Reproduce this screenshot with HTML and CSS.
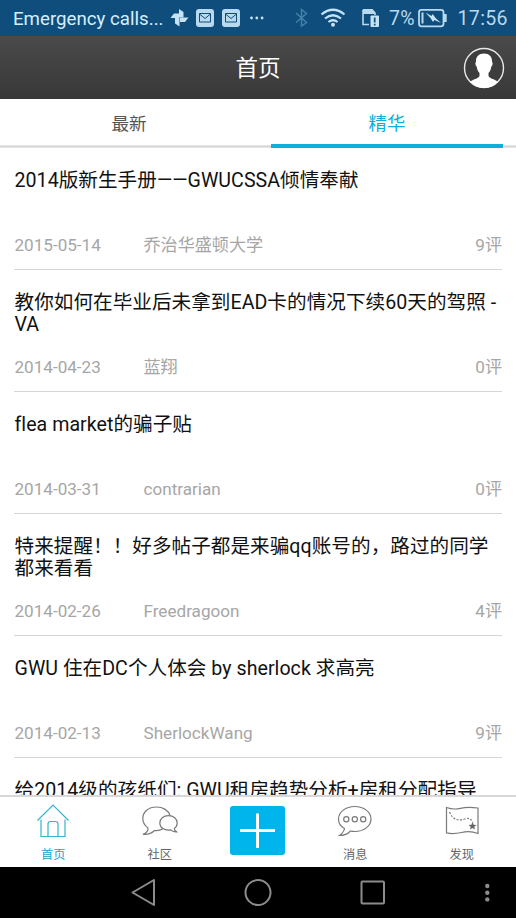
FILE: index.html
```html
<!DOCTYPE html>
<html lang="zh-CN">
<head>
    <meta charset="UTF-8">
    <meta name="viewport" content="width=device-width, initial-scale=1.0">
    <title>首页</title>
    <link rel="stylesheet" href="styles.css">
</head>
<body>
<div class="phone">
    <div class="status">
        <span class="carrier">Emergency calls...</span>
        <svg class="status-icons" width="354" height="36" viewBox="162 0 354 36">
            <!-- pinwheel -->
            <g fill="#c6e2f5">
                <path d="M179 17.500V9l4.500 3v5.500z"/>
                <path d="M180 17.500h8.500l-3.500 4.500h-5z"/>
                <path d="M179.500 18v8.500l-4.500-3V18z"/>
                <path d="M179 18h-8.500l3.500-4.500h5z"/>
            </g>
            <!-- mail -->
            <g fill="#b9d9ee">
                <rect x="196" y="9" width="18" height="18" rx="3"/>
                <rect x="222" y="9" width="18" height="18" rx="3"/>
            </g>
            <g fill="none" stroke="#0e4d7c" stroke-width="1">
                <path d="M199.500 13.500h11v8.500h-11zM199.500 14l5.500 4.500 5.500-4.500"/>
                <path d="M225.500 13.500h11v8.500h-11zM225.500 14l5.500 4.500 5.500-4.500"/>
            </g>
            <g fill="#c6e2f5">
                <circle cx="251.500" cy="18" r="1.400"/>
                <circle cx="256.800" cy="18" r="1.400"/>
                <circle cx="262.100" cy="18" r="1.400"/>
            </g>
            <!-- bluetooth -->
            <path d="M296 13l10.500 9.500-5 3.500V9.500l5 4L296 22.500" fill="none" stroke="#4480a8" stroke-width="1.500"/>
            <!-- wifi -->
            <g fill="none" stroke="#c6e2f5" stroke-width="2.200">
                <path d="M321.500 14.500q11.500-9.500 23 0"/>
                <path d="M325 18.500q8-6.500 16 0"/>
                <path d="M328.500 22q4.500-3.500 9 0"/>
            </g>
            <circle cx="333" cy="24.700" r="2" fill="#c6e2f5"/>
            <!-- sim -->
            <path d="M363 9.800h9l3 3.200v2M363 9.800V24.500h6" fill="none" stroke="#b9d9ee" stroke-width="1.600"/>
            <path d="M363 9h9l3 3.500v1.500h-12z" fill="#b9d9ee"/>
            <rect x="370.500" y="15.500" width="8.500" height="11.500" rx="1" fill="#c6e2f5"/>
            <path d="M374.700 17.500v5M374.700 23.800v1.700" stroke="#0e4d7c" stroke-width="1.700"/>
            <!-- battery -->
            <rect x="419" y="9.800" width="24.500" height="16.500" rx="2.500" fill="none" stroke="#b9d9ee" stroke-width="1.800"/>
            <path d="M444 14h2.700v8H444z" fill="#b9d9ee"/>
            <path d="M421.500 12.500h2v11h-2z" fill="#b9d9ee"/>
            <path d="M425.500 12.500l6 3.500 1.200-2 2.800 4 5.500 5-6.500-3-1.500 2-2.500-4z" fill="#c6e2f5"/>
            <text class="status-text" x="389" y="25.300" textLength="25.500">7%</text>
            <text class="status-text" x="457.500" y="25.300" textLength="50">17:56</text>
        </svg>
    </div>

    <div class="header">
        <h1>首页</h1>
        <svg class="avatar" width="42" height="42" viewBox="0 0 42 42">
            <circle cx="21" cy="21" r="19.500" fill="#3d3d3d" stroke="#e8e8e8" stroke-width="1.400"/>
            <path d="M21 6.500c5.500 0 8.300 3.500 8 8.500 1 .5.800 3.500-.7 4.500-.3 3-1.300 5-2.800 6.500v3c1.500 3 6.500 3 9.500 6A19.500 19.500 0 0 1 7 35c3-3 8-3 9.500-6v-3c-1.500-1.500-2.500-3.500-2.800-6.500-1.500-1-1.700-4-.7-4.500-.3-5 2.500-8.500 8-8.500z" fill="#fff"/>
        </svg>
    </div>

    <div class="tabs">
        <div class="tab">最新</div>
        <div class="tab active">精华</div>
    </div>

    <div class="list">
        <div class="item">
            <div class="title">2014版新生手册——GWUCSSA倾情奉献</div>
            <div class="meta"><span class="date">2015-05-14</span><span class="author">乔治华盛顿大学</span><span>9评</span></div>
        </div>
        <div class="item">
            <div class="title">教你如何在毕业后未拿到EAD卡的情况下续60天的驾照 -<br>VA</div>
            <div class="meta"><span class="date">2014-04-23</span><span class="author">蓝翔</span><span>0评</span></div>
        </div>
        <div class="item">
            <div class="title">flea market的骗子贴</div>
            <div class="meta"><span class="date">2014-03-31</span><span class="author">contrarian</span><span>0评</span></div>
        </div>
        <div class="item">
            <div class="title">特来提醒！！好多帖子都是来骗qq账号的，路过的同学<br>都来看看</div>
            <div class="meta"><span class="date">2014-02-26</span><span class="author">Freedragoon</span><span>4评</span></div>
        </div>
        <div class="item">
            <div class="title">GWU 住在DC个人体会 by sherlock 求高亮</div>
            <div class="meta"><span class="date">2014-02-13</span><span class="author">SherlockWang</span><span>9评</span></div>
        </div>
        <div class="item">
            <div class="title">给2014级的孩纸们: GWU租房趋势分析+房租分配指导</div>
        </div>
    </div>

    <div class="nav">
        <div class="nav-item current">
            <svg width="36" height="36" viewBox="0 0 36 36">
                <path d="M2.500 17.500L18 2 33.500 17.500M6 16.500v17h7V21q0-2.500 2.500-2.500h5Q23 18.500 23 21v12.500h7v-17M13 33.500h10"/>
            </svg>
            <span>首页</span>
        </div>
        <div class="nav-item">
            <svg width="36" height="36" viewBox="0 0 36 36">
                <path d="M28 12.500C26.500 7.500 21 4 14.500 4 6.500 4 .8 9 .8 15.500c0 3.500 1.700 7 5.200 9.500.3 3-1.500 5-5 6.300 4.500.3 8.500-.5 11.500-3.800 3 .3 6-.3 8.500-1.800"/>
                <path d="M26.500 12.700c5 0 8.700 3 8.700 7.300 0 2.500-1.200 4.300-2.900 5.500 0 1.300.7 2.300 2.200 3.300-2.200.2-4.200-.3-5.900-1.900-6 .8-10.800-2-10.800-6.900 0-4.300 3.700-7.300 8.700-7.300z"/>
            </svg>
            <span>社区</span>
        </div>
        <div class="nav-add">
            <svg width="55" height="49" viewBox="0 0 55 49">
                <rect width="55" height="49" rx="3"/>
                <path d="M10 24.500h35M27.500 7.500v34.500"/>
            </svg>
        </div>
        <div class="nav-item">
            <svg width="36" height="36" viewBox="0 0 36 36">
                <path d="M17.800 3.500c9 0 16.200 5.500 16.200 12.500s-7.200 12.500-16.200 12.500c-1.500 0-3-.2-4.300-.5-3 3.300-6.500 4.500-11 4.500 2.700-2 4.500-4 5-7C3.500 23.500 1.500 20 1.500 16c0-7 7.300-12.500 16.300-12.500z"/>
                <circle cx="9.300" cy="16.300" r="2.600"/>
                <circle cx="17.800" cy="16.300" r="2.600"/>
                <circle cx="26.200" cy="16.300" r="2.600"/>
            </svg>
            <span>消息</span>
        </div>
        <div class="nav-item">
            <svg width="36" height="36" viewBox="0 0 36 36">
                <path d="M2.500 4.500q7 2.500 14 .8t17.500-.3v25.500q-8-3-16.500-1-9 2-15 .3z"/>
                <path stroke-dasharray="2 1.500" d="M5.500 9q2.500 6 7 7.500 4 1 8-.5 6-2 8.500 3.500"/>
                <path fill="#666" stroke="none" d="M28.500 19l1.100 2.700 2.900.2-2.200 1.900.7 2.800-2.500-1.500-2.500 1.500.7-2.800-2.200-1.900 2.900-.2z"/>
            </svg>
            <span>发现</span>
        </div>
    </div>

    <div class="keys">
        <svg width="516" height="51" viewBox="0 867 516 51">
            <g fill="none" stroke="#8c8c8c" stroke-width="2" stroke-linejoin="round">
                <path d="M132.500 892.500l21.500-12.500v25z"/>
                <circle cx="258" cy="892.500" r="12.500"/>
                <rect x="361.500" y="881.500" width="22.500" height="22" rx="1"/>
            </g>
            <g fill="#8c8c8c">
                <circle cx="487.300" cy="886" r="2.200"/>
                <circle cx="487.300" cy="892.700" r="2.200"/>
                <circle cx="487.300" cy="899.400" r="2.200"/>
            </g>
        </svg>
    </div>
</div>
</body>
</html>
```

FILE: styles.css
```css
body{
    margin: 0;
    font-family: Roboto, "Noto Sans CJK SC", sans-serif;
    font-variant-ligatures: none;
}
.phone{
    width: 516px;
    height: 918px;
    display: flex;
    flex-direction: column;
    overflow: hidden;
    background: #fff;
}
svg{
    display: block;
}
.status{
    height: 36px;
    flex: none;
    display: flex;
    align-items: center;
    background: #0e4d7c;
    color: #d6efff;
}
.carrier{
    width: 149px;
    padding-left: 13px;
    font-size: 18.7px;
    line-height: 36px;
    padding-top: 1px;
    white-space: nowrap;
}
.status-icons{
    flex: none;
}
.status-text{
    font-size: 19.5px;
    fill: #b9d9ee;
}
.header{
    height: 63px;
    flex: none;
    display: grid;
    grid-template-columns: 53px 1fr 53px;
    align-items: center;
    background: linear-gradient(#4a4a4a, #383838);
}
.header h1{
    grid-column: 2;
    margin: 0;
    font-size: 22.5px;
    font-weight: 400;
    line-height: 30px;
    text-align: center;
    color: #fff;
}
.tabs{
    height: 49px;
    flex: none;
    box-sizing: border-box;
    display: grid;
    grid-template-columns: 232px 232px;
    column-gap: 26px;
    padding: 0 13px;
    background: linear-gradient(#fff, #fff 46px, #ccc 47px, #eee 49px);
}
.tab{
    height: 49px;
    box-sizing: border-box;
    text-align: center;
    font-size: 17.6px;
    line-height: 50px;
    color: #555;
}
.tab.active{
    font-size: 18.4px;
    color: #10add9;
    border-bottom: 4px solid #12aedb;
}
.list{
    flex: 1;
    min-height: 0;
    overflow: hidden;
    padding: 0 14px;
}
.item{
    height: 122px;
    box-sizing: border-box;
    display: flex;
    flex-direction: column;
    justify-content: space-between;
    padding: 22px 0 12px;
    border-bottom: 1px solid #d4d4d4;
}
.title{
    padding-left: 0.5px;
    font-size: 19.6px;
    letter-spacing: 0.04px;
    line-height: 22px;
    white-space: nowrap;
    color: #111;
}
.meta{
    display: flex;
    padding-left: 0.5px;
    font-size: 17.1px;
    line-height: 24px;
    color: #a6a6a6;
}
.date{
    width: 129px;
}
.author{
    flex: 1;
}
.nav{
    height: 72px;
    flex: none;
    box-sizing: border-box;
    display: flex;
    padding-right: 1px;
    border-top: 2px solid #d8d8d8;
    background: #fff;
}
.nav-item{
    flex: 1;
    display: flex;
    flex-direction: column;
    align-items: center;
    padding-top: 6px;
    font-size: 12.2px;
    line-height: 16px;
    color: #666;
}
.nav-item svg{
    fill: none;
    stroke: #7a7a7a;
    stroke-width: 1.2;
    margin-bottom: 8px;
}
.nav-item.current{
    color: #12a5d0;
}
.nav-item.current svg{
    stroke: #35b3cf;
}
.nav-add{
    width: 89px;
    display: flex;
    justify-content: center;
    padding-top: 9px;
}
.nav-add rect{
    fill: #00b5ec;
}
.nav-add path{
    stroke: #fff;
    stroke-width: 3;
}
.keys{
    height: 51px;
    flex: none;
    background: #000;
}
```
